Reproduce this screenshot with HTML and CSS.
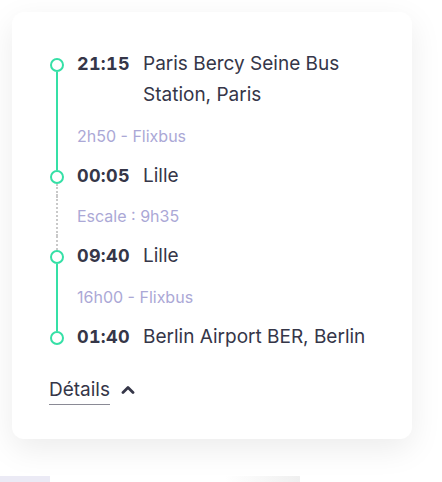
FILE: index.html
```html
<!DOCTYPE html>
<html lang="fr">
<head>
<meta charset="utf-8">
<link rel="stylesheet" href="styles.css">
</head>
<body>
<div class="card">
  <div class="timeline">
    <div class="row stop first">
      <div class="rail"><span class="seg seg-top none"></span><span class="dot"></span><span class="seg seg-bottom"></span></div>
      <div class="content"><span class="time">21:15</span><span class="place">Paris Bercy Seine Bus Station, Paris</span></div>
    </div>
    <div class="row info">
      <div class="rail"><span class="seg"></span></div>
      <div class="content note">2h50 - Flixbus</div>
    </div>
    <div class="row stop">
      <div class="rail"><span class="seg seg-top"></span><span class="dot"></span><span class="seg seg-bottom dotted"></span></div>
      <div class="content"><span class="time">00:05</span><span class="place">Lille</span></div>
    </div>
    <div class="row info">
      <div class="rail"><span class="seg dotted"></span></div>
      <div class="content note">Escale : 9h35</div>
    </div>
    <div class="row stop">
      <div class="rail"><span class="seg seg-top dotted"></span><span class="dot"></span><span class="seg seg-bottom"></span></div>
      <div class="content"><span class="time">09:40</span><span class="place">Lille</span></div>
    </div>
    <div class="row info">
      <div class="rail"><span class="seg"></span></div>
      <div class="content note">16h00 - Flixbus</div>
    </div>
    <div class="row stop">
      <div class="rail"><span class="seg seg-top"></span><span class="dot"></span><span class="seg seg-bottom none"></span></div>
      <div class="content"><span class="time">01:40</span><span class="place">Berlin Airport BER, Berlin</span></div>
    </div>
  </div>
  <button class="details" type="button">
    <span class="details-label">Détails</span>
    <svg class="chev" width="14" height="9" viewBox="0 0 14 9"><polyline points="2,7.5 7,2.5 12,7.5" fill="none" stroke="#353648" stroke-width="2.8" stroke-linecap="round" stroke-linejoin="round"/></svg>
  </button>
</div>
<div class="below">
  <div class="tab-a"></div>
  <div class="tab-b"></div>
</div>
</body>
</html>
```
FILE: styles.css
```css
* { box-sizing: border-box; }
html, body { margin: 0; background: #ffffff; }
body {
  padding: 12px 30px 0 12px;
  font-family: "Inter", "Liberation Sans", sans-serif;
  color: #353648;
}
.card {
  width: 400px;
  height: 427px;
  background: #fff;
  border-radius: 12px;
  box-shadow: 0 10px 32px rgba(0,0,0,0.08);
  padding: 32px 20px 0 38px;
}
.timeline { display: flex; flex-direction: column; }
.row { display: flex; }
.rail {
  width: 14px;
  flex: none;
  display: flex;
  flex-direction: column;
  align-items: center;
}
.seg {
  width: 2px;
  flex: 1;
  background: #35e0a6;
}
.seg-top { flex: none; height: 14px; }
.seg.none { background: transparent; }
.seg.dotted {
  background: transparent;
  border-left: 2px dotted #c9c9c9;
}
.dot {
  width: 14px;
  height: 14px;
  border: 2px solid #35e0a6;
  border-radius: 50%;
  flex: none;
}
.content {
  display: flex;
  padding: 5px 0 5px 13px;
  line-height: 30px;
  font-size: 19px;
}
.stop .content { line-height: 30.8px; }
.time {
  width: 66px;
  flex: none;
  font-weight: 700;
  font-size: 18px;
  letter-spacing: 0.3px;
  font-variant-numeric: tabular-nums;
}
.place { flex: 1; }
.note {
  font-size: 16px;
  color: #aba8d6;
}
.details {
  margin: 17px 0 0 -1px;
  padding: 0;
  border: 0;
  background: none;
  font: inherit;
  color: #353648;
  display: flex;
  align-items: center;
  gap: 11px;
}
.details-label {
  font-size: 19px;
  line-height: 29px;
  border-bottom: 1px solid #8a8a95;
}
.below {
  display: flex;
  margin: 37px 0 0 -12px;
  height: 6px;
}
.tab-a { width: 50px; background: #ebeaf5; }
.tab-b { width: 250px; background: linear-gradient(90deg, #fff 0%, #fff 70%, #efefef 100%); }
```
